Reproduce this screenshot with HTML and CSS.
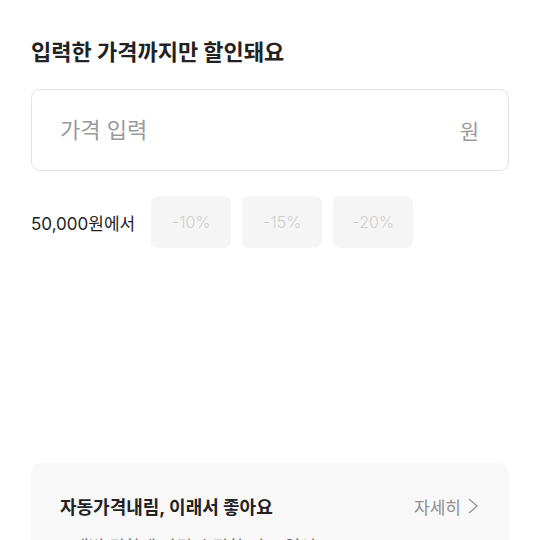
FILE: index.html
```html
<!DOCTYPE html>
<html lang="ko">
<head>
    <meta charset="UTF-8">
    <meta name="viewport" content="width=device-width, initial-scale=1.0">
    <link rel="stylesheet" href="styles.css">
    <title>자동가격내림</title>
</head>
<body>
    <div class="page">
        <h1 class="title">입력한 가격까지만 할인돼요</h1>

        <label class="price-box">
            <input class="price-input" type="text" placeholder="가격 입력">
            <span class="unit">원</span>
        </label>

        <div class="discount-row">
            <span class="base-price">50,000원에서</span>
            <button class="chip">-10%</button>
            <button class="chip">-15%</button>
            <button class="chip">-20%</button>
        </div>

        <div class="info-card">
            <div class="info-head">
                <span class="info-title">자동가격내림, 이래서 좋아요</span>
                <a class="more" href="#">자세히
                    <svg width="12" height="18" viewBox="0 0 12 18"><path d="M2 2l8 7-8 7" fill="none" stroke="#999" stroke-width="1.4"/></svg>
                </a>
            </div>
            <ul class="info-list">
                <li>매번 귀찮게 가격 수정할 필요 없어요</li>
                <li>원하는 가격까지만 내려가요</li>
            </ul>
        </div>
    </div>
</body>
</html>
```

FILE: styles.css
```css
* {
    box-sizing: border-box;
}

body {
    margin: 0;
    font-family: Inter, "Noto Sans CJK KR", sans-serif;
    color: #222;
    background: #fff;
}

.page {
    padding: 37px 31px 0 31px;
}

.title {
    margin: 0;
    font-size: 22px;
    line-height: 30px;
    font-weight: 700;
    color: #222;
}

.price-box {
    display: flex;
    align-items: center;
    height: 82px;
    margin-top: 22px;
    padding: 0 29px 0 28px;
    border: 1px solid #e3e3e3;
    border-radius: 9px;
}

.price-input {
    flex: 1;
    border: none;
    outline: none;
    font-family: inherit;
    font-size: 22px;
    color: #222;
    padding: 0;
    background: transparent;
}

.price-input::placeholder {
    color: #9a9a9a;
}

.unit {
    font-size: 21px;
    color: #9a9a9a;
}

.discount-row {
    display: flex;
    align-items: center;
    gap: 11px;
    margin-top: 25px;
}

.base-price {
    font-size: 17px;
    color: #222;
    margin-right: 5px;
}

.chip {
    width: 80px;
    height: 52px;
    border: none;
    border-radius: 7px;
    background: #f5f5f5;
    color: #cfcfcf;
    font-family: inherit;
    font-size: 16px;
    font-weight: 300;
}

.info-card {
    margin-top: 215px;
    padding: 30px 30px 20px 29px;
    background: #f8f8f8;
    border-radius: 10px;
}

.info-head {
    display: flex;
    justify-content: space-between;
    align-items: center;
}

.info-title {
    font-size: 18px;
    font-weight: 700;
    color: #222;
}

.more {
    display: flex;
    align-items: center;
    gap: 6px;
    font-size: 17px;
    color: #8f8f8f;
    text-decoration: none;
}

.info-list {
    margin: 14px 0 0 0;
    padding: 0;
    list-style: none;
    font-size: 17px;
    color: #666;
}

.info-list li::before {
    content: "·";
    margin-right: 8px;
}
```
